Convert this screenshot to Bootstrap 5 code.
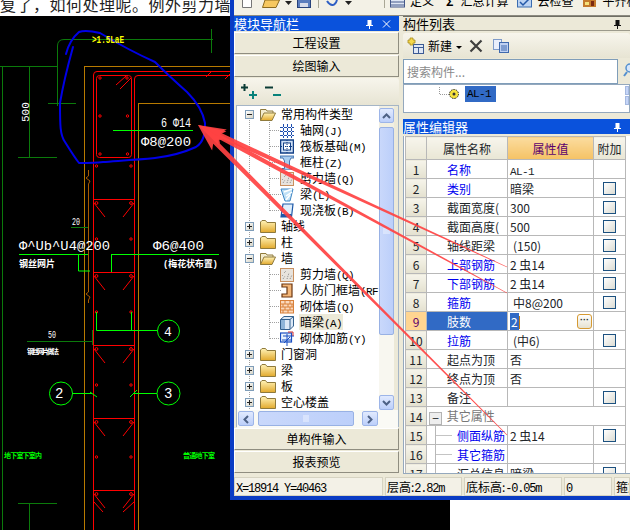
<!DOCTYPE html>
<html lang="zh">
<head>
    <meta charset="UTF-8">
    <title>模块导航栏 / 属性编辑器</title>
    <link href="https://cdn.jsdelivr.net/npm/bootstrap@5.3.3/dist/css/bootstrap.min.css" rel="stylesheet">
    <style>
        html, body { width: 630px; height: 530px; overflow: hidden; background: #000; }
        body { font: 12px/16px "Noto Sans CJK SC", "Liberation Sans", sans-serif; color: #000; }
        .shot { position: relative; width: 630px; height: 530px; }
        .asc { font: 11px "Liberation Mono", monospace; letter-spacing: -.6px; }

        /* left column: forum text + CAD drawing */
        .left-col { width: 230px; flex: none; }
        .forum-strip { height: 16px; background: #fff; overflow: hidden; white-space: nowrap; font-size: 16px; line-height: 16px; letter-spacing: .5px; color: #222; }
        .forum-strip span { display: block; margin-top: -4px; }
        .cad { display: block; width: 230px; height: 514px; background: #000; }
        .cad text { font-family: "Liberation Mono", "Noto Sans CJK SC", monospace; fill: #fff; }

        /* application window */
        .right-col { width: 400px; flex: none; }
        .app-win { height: 500px; background: #ece9d8; border-left: 4px solid #0a3cc4; border-bottom: 4px solid #0a3cc4; }
        .tool-strip { height: 16px; overflow: hidden; background: #f3f1e6; border-bottom: 1px solid #8d8b80; padding-left: 8px; }
        .tool-row { height: 8px; }
        .tool-row > * { flex: none; }
        .tool-row svg { display: block; }
        .tool-txt { font-size: 12px; line-height: 14px; }
        .tool-sep { width: 1px; height: 8px; background: #a9a796; }
        .m5 { margin-left: 5px; }
        .m7 { margin-left: 7px; }
        .m9 { margin-left: 9px; }
        .m10 { margin-left: 10px; }
        .m12 { margin-left: 12px; }
        .m32 { margin-left: 32px; }
        .bottom-pad { height: 30px; }
        .bottom-black { width: 220px; background: #000; }
        .bottom-white { flex: 1; background: #fff; }

        .dock-left { width: 165px; flex: none; }
        .dock-gap { width: 4px; flex: none; }
        .dock-right { width: 227px; flex: none; }
        .title-blue { height: 15px; background: #0a52dc; color: #fff; font-size: 13px; line-height: 15px; }
        .title-tan { height: 15px; background: #ece9d8; border-top: 1px solid #6f6e64; border-bottom: 1px solid #9c9a8c; font-size: 13px; line-height: 13px; }
        .pin { width: 9px; height: 10px; flex: none; }
        .dock-btn-top { height: 1px; }
        .dock-btn { display: block; width: 100%; height: 22px; padding: 0; margin-bottom: 1px; font-size: 12px; line-height: 18px; color: #000; background: #ece9d8; border: 1px solid #fff; border-right-color: #8f8d80; border-bottom-color: #8f8d80; border-radius: 0; }
        .nav-inner { height: 350px; margin-left: 2px; }
        .nav-tools { height: 27px; background: linear-gradient(#f7f5ec, #e7e4d3); padding-left: 5px; border-radius: 3px 3px 0 0; }
        .tree-wrap { height: 322px; background: #ece9d8; border: 1px solid #a5b5c6; }
        .tree-main { width: 142px; flex: none; height: 304px; background: #fff; overflow: hidden; }
        .vbar { width: 15px; flex: none; height: 304px; padding-top: 2px; background: #f1efe2; }
        .hbar { height: 18px; padding: 1px 0 2px 1px; background: #fafaf5; }
        .sb-btn { background: linear-gradient(#e1eafe, #bccffa); border: 1px solid #9db5e8; border-radius: 2px; color: #4d6185; flex: none; }
        .sb-btn svg { display: block; margin: auto; }
        .sb-thumb { background: linear-gradient(90deg, #c9d8fb, #bccffa); border: 1px solid #98b1e4; border-radius: 2px; }
        .v-btn { height: 15px; padding-top: 4px; }
        .h-btn { width: 16px; padding-top: 3px; }
        .v-track { height: 60px; flex: none; background: #f8f7f0; }
        .h-thumb { width: 96px; }

        .tree-row { height: 16px; white-space: nowrap; background-repeat: no-repeat; background-image: repeating-linear-gradient(#a0a0a0 0 1px, transparent 1px 2px); background-size: 1px 100%; background-position: 12px 0; }
        .tree-row.lv1 { padding-left: 8px; }
        .tree-row.lv2 { padding-left: 43px; background-image: repeating-linear-gradient(#a0a0a0 0 1px, transparent 1px 2px), repeating-linear-gradient(#a0a0a0 0 1px, transparent 1px 2px), repeating-linear-gradient(90deg, #a0a0a0 0 1px, transparent 1px 2px); background-size: 1px 100%, 1px 100%, 11px 1px; background-position: 12px 0, 32px 0, 33px 8px; }
        .tree-row.lv2.last { background-size: 1px 100%, 1px 9px, 11px 1px; }
        .tree-row.first { background-position: 12px 8px; }
        .exp-box { width: 9px; height: 9px; flex: none; background: linear-gradient(135deg, #fff, #d5d3c5); border: 1px solid #7f9db9; margin-right: 6px; }
        .exp-box svg { display: block; }
        .tree-folder { width: 16px; height: 14px; flex: none; margin-right: 5px; }
        .tree-ico { width: 14px; height: 15px; flex: none; margin-right: 6px; }
        .tree-sel { background: #ece9d8; padding: 0 1px; margin-left: -1px; }

        .status-row { height: 19px; margin-top: 3px; gap: 2px; }
        .status-cell { height: 19px; flex: none; background: #f3f1e7; border: 1px solid #d6d3c2; padding-left: 1px; line-height: 17px; overflow: hidden; white-space: nowrap; }
        .status-cell .asc { font-size: 12px; letter-spacing: -1.2px; }
        .st1 { width: 149px; }
        .st2 { width: 77px; }
        .st3 { width: 98px; }
        .st4 { width: 48px; }
        .st5 { flex: 1 !important; }

        .list-tools { height: 25px; margin-top: 2px; background: linear-gradient(#f7f5ec, #e7e4d3); padding-left: 4px; border-radius: 3px 3px 0 0; }
        .list-new::after { vertical-align: 2px; margin-left: 4px; border-top-width: 3px; border-left-width: 3px; border-right-width: 3px; }
        .search-row { height: 25px; margin-top: 1px; }
        .search-box { width: 216px; height: 25px; padding: 0 3px; border: 1px solid #7f9db9; border-radius: 0; font-size: 12px; }
        .search-box::placeholder { color: #8a8a8a; }
        .list-box { height: 29px; background: #fff; border: 1px solid #94a8bd; padding: 1px 0 0 34px; }
        .sel-item { background: #316ac5; padding: 0 2px; line-height: 16px; height: 16px; width: 31px; }
        .mini-bar { width: 4px; margin-left: auto; }
        .mini-bar i { display: block; height: 9px; margin-bottom: 1px; background: #c5d5f7; border: 1px solid #a5b9e0; }
        .prop-title { margin-top: 6px; }
        .grid-wrap { height: 338px; overflow: hidden; margin-top: 2px; background: #fff; border-left: 1px solid #94a8bd; border-bottom: 1px solid #94a8bd; }
        .grid-main { width: 222px; flex: none; }
        .grid-bar { width: 4px; padding-top: 1px; }
        .grid-bar i { display: block; height: 10px; margin-bottom: 2px; background: #c5d5f7; border: 1px solid #a5b9e0; }
        .prop-grid { --bs-border-color: #b8b8b8; width: 220px; margin: 0 0 0 1px; table-layout: fixed; }
        .prop-grid th, .prop-grid td { padding: 0; height: 19px; font-weight: 400; font-size: 12px; line-height: 17px; white-space: nowrap; overflow: hidden; vertical-align: middle; }
        .prop-grid thead th { height: 23px; text-align: center; background: linear-gradient(#f7f5ec, #e9e6d5); }
        .prop-grid thead th.hd-val { background: linear-gradient(#fbdc9f, #f5c264); color: #5a006e; }
        .prop-grid tbody th { text-align: center; background: linear-gradient(#f6f4ea, #e4e1cf); }
        .prop-grid td.nm { padding-left: 20px; }
        .prop-grid td.sub { padding-left: 30px; }
        .prop-grid td.val { padding-left: 2px; }
        .prop-grid td.pad { padding-left: 5px; }
        .lnk { color: #0000f0; }
        .prop-grid tr.cur th { background: #ffd591; color: #5a006e; }
        .prop-grid tr.cur td.nm { background: #316ac5; color: #fff; }
        .chk { display: block; width: 13px; height: 13px; margin: 0 0 0 9px; border: 1px solid #1c5180; background: linear-gradient(135deg, #fff, #dcdcd3); }
        .val-sel { background: #316ac5; color: #fff; padding: 0 1px; }
        .caret-bar { display: inline-block; width: 1px; height: 13px; background: #c47a10; vertical-align: -2px; }
        .dots-btn { width: 15px; height: 15px; background: linear-gradient(#fff, #e6e2d0); border: 1px solid #d69a32; border-radius: 3px; font: 700 9px/11px "Liberation Sans", sans-serif; text-align: center; margin-right: 1px; }
        .grp-box { display: inline-block; width: 13px; height: 13px; margin: 0 2px; border: 1px solid #b3b3b3; background: #eeeeee; text-align: center; line-height: 10px; vertical-align: -2px; }
        .grp-txt { color: #777; }
        .sub-line { position: relative; }
        .sub-line::before { content: ""; position: absolute; left: 8px; top: -1px; bottom: -1px; width: 1px; background: #b8b8b8; }
        .sub-line::after { content: ""; position: absolute; left: 9px; top: 9px; width: 16px; height: 1px; background: #c4c4c4; }

        .arrows { position: absolute; left: 0; top: 0; width: 630px; height: 530px; pointer-events: none; }
        .defs-holder { width: 0; height: 0; overflow: hidden; }
    </style>
</head>
<body>

<div class="shot d-flex">

    <!-- CAD -->
    <div class="left-col">
        <div class="forum-strip"><span>复了，如何处理呢。例外剪力墙箍</span></div>
        <svg class="cad" id="cad" viewBox="0 16 230 514" fill="none">
            <!-- long verticals -->
            <rect x="2" y="66" width="1" height="464" fill="#0b7a0b"/>
            <rect x="84" y="66" width="1" height="464" fill="#b87a00"/>
            <rect x="138" y="103" width="1" height="427" fill="#b87a00"/>
            <rect x="93" y="75" width="1" height="455" fill="#f00"/>
            <rect x="134" y="79" width="1" height="451" fill="#f00"/>
            <!-- dark green dimensions -->
            <g stroke="#0b7a0b" stroke-width="1">
                <path d="M0 66.5H57.5M29.5 66V157M18 157.5H57M57.5 106V46Q57.5 39.5 64 39.5H213M211.5 29V53M48 103.5H76"/>
                <path d="M71 227.5H88M27 341.5H92M92.5 330V345M18 503.5H57M29.5 503V530"/>
            </g>
            <!-- brown outline -->
            <path d="M84 66.5H230M138 103.5H230" stroke="#b87a00"/>
            <path d="M88.5 170V176L86 178L90 181L88.5 184V292L86 294L90 297L88.5 300V303" stroke="#a85a00"/>
            <!-- red rebar -->
            <g stroke="#f00" id="red">
                <path d="M93.5 75Q93.5 71.5 97 71.5H230M134.5 79Q134.5 75.5 138 75.5H230"/>
                <rect x="96.5" y="75.5" width="35" height="82" rx="3"/>
                <path d="M116 85L126 76M120 89L131 78M206 77L212 71M225 79L230 74"/>
            </g>
            <!-- bright green leaders -->
            <g stroke="#0f0">
                <path d="M113 130.5H193M19 254.5H88M111 254.5H219M78.5 254V271H90M111.5 254V272"/>
                <path d="M96.5 312V330.5H157M131.5 312V331"/>
                <path d="M72 393.5H92M90 392L97 397M133 393.5H157M130 397L137 390"/>
                <circle cx="168.5" cy="331" r="11"/>
                <circle cx="61" cy="393.5" r="11.5"/>
                <circle cx="168.5" cy="393.5" r="11.5"/>
            </g>
            <!-- hand drawn blue ring -->
            <path stroke="#0000e6" stroke-width="2" stroke-linejoin="round" stroke-linecap="round" d="M66 54C68 46 72 38 79 32C84 30 92 31 100 33C115 42 135 53 155 62C165 72 178 84 187 92C197 102 203 112 205 123C205 133 204 142 196 147C185 152 172 156 155 158C135 160 115 161 103 162C95 163 88 163 79 163C75 158 70 150 65 142C60 135 60 125 60 103C63 85 68 65 73 47"/>
            <!-- labels -->
            <text x="92" y="43" font-size="10" font-weight="700" style="fill:#ff0" textLength="32" lengthAdjust="spacingAndGlyphs">&gt;1.5LaE</text>
            <text transform="translate(29 122) rotate(-90)" font-size="11">500</text>
            <text x="161" y="127" font-size="13" textLength="30" lengthAdjust="spacingAndGlyphs">6 Φ14</text>
            <text x="141" y="146" font-size="13" textLength="50" lengthAdjust="spacingAndGlyphs">Φ8@200</text>
            <text x="72" y="225" font-size="10" textLength="8" lengthAdjust="spacingAndGlyphs">20</text>
            <text x="19" y="250" font-size="13" textLength="91" lengthAdjust="spacingAndGlyphs">Φ^Ub^U4@200</text>
            <text x="153" y="250" font-size="13" textLength="51" lengthAdjust="spacingAndGlyphs">Φ6@400</text>
            <text x="19" y="267" font-size="9" font-weight="700" textLength="36">钢丝网片</text>
            <text x="163" y="267" font-size="9" font-weight="700" textLength="55">(梅花状布置)</text>
            <text x="48" y="338" font-size="10" textLength="8" lengthAdjust="spacingAndGlyphs">50</text>
            <text x="27" y="354" font-size="7" font-weight="700" textLength="32">钢丝网片做法</text>
            <text x="164" y="336" font-size="13">4</text>
            <text x="55" y="398" font-size="14">2</text>
            <text x="164" y="398" font-size="14">3</text>
            <text x="4" y="458" font-size="7" font-weight="700" style="fill:#0f0" textLength="38">地下室下室内</text>
            <text x="183" y="458" font-size="7" font-weight="700" style="fill:#0f0" textLength="32">普通地下室</text>
        </svg>
    </div>

    <div class="right-col d-flex flex-column">
        <div class="app-win">
            <!-- main toolbar, mostly cut off by the window above -->
            <div class="tool-strip">
                <div class="tool-row d-flex align-items-end">
                    <svg width="10" height="8"><path d="M.5 0V7.5H9.5V0" fill="#fff" stroke="#777"/></svg>
                    <svg class="m10" width="18" height="8"><path d="M3 0L.5 7.5H14L17.5 0Z" fill="#f6c860" stroke="#8a6a20"/></svg>
                    <svg class="m5" width="7" height="8"><path d="M0 1H7L3.5 5Z" fill="#222"/></svg>
                    <svg class="m5" width="14" height="8"><rect x=".5" y="-4" width="13" height="11.5" fill="#5b7dbd" stroke="#27427a"/><rect x="3" y="3" width="8" height="4" fill="#d8dcea"/></svg>
                    <span class="tool-sep m7"></span>
                    <svg class="m7" width="12" height="8"><path d="M1 1C5 7 9 6 11 0" fill="none" stroke="#2f5fc4" stroke-width="2"/></svg>
                    <svg class="m7" width="7" height="8"><path d="M0 1H7L3.5 5Z" fill="#222"/></svg>
                    <span class="tool-sep m32"></span>
                    <svg class="m5" width="15" height="8"><rect x=".5" y="-4" width="14" height="11" fill="#dfe7f5" stroke="#45598a"/><path d="M1 2H14M1 5H14" stroke="#45598a"/></svg>
                    <span class="tool-txt m5">定义</span>
                    <span class="tool-txt m12 fw-bold">Σ</span>
                    <span class="tool-txt m7">汇总计算</span>
                    <svg class="m9" width="15" height="8"><rect x=".5" y="-4" width="14" height="11" fill="#bcd3f2" stroke="#3a6cb0"/><path d="M3 2L6 5L12 -1" stroke="#2459a8" stroke-width="1.5" fill="none"/></svg>
                    <span class="tool-txt m5">云检查</span>
                    <svg class="m9" width="15" height="8"><rect x="1" y="0" width="13" height="7" fill="#c47a2c"/><rect x="3" y="2" width="4" height="3" fill="#f6e27a"/><rect x="9" y="1" width="3" height="5" fill="#7b2a10"/></svg>
                    <span class="tool-txt m5">平齐板顶</span>
                </div>
            </div>

            <div class="d-flex">
                <!-- module nav -->
                <div class="dock-left">
                    <div class="title-blue d-flex align-items-center">
                        <span class="flex-grow-1">模块导航栏</span>
                        <svg class="pin me-2" viewBox="0 0 9 10"><path d="M2.5 1H6.5V6H8V7H5V10H4V7H1V6H2.5Z" fill="#fff"/></svg>
                        <svg class="pin me-2" viewBox="0 0 9 10"><path d="M1 1.5L8 8.5M8 1.5L1 8.5" stroke="#fff"/></svg>
                    </div>
                    <div class="dock-btn-top"></div>
                    <button type="button" class="btn dock-btn">工程设置</button>
                    <button type="button" class="btn dock-btn">绘图输入</button>
                    <div class="nav-inner d-flex flex-column">
                        <div class="nav-tools d-flex align-items-center gap-2">
                            <svg width="16" height="15"><path d="M3.5 0V7M0 3.5H7" stroke="#0a3b35" stroke-width="2"/><path d="M12 7V15M8 11H16" stroke="#08827a" stroke-width="2"/></svg>
                            <svg width="16" height="15"><path d="M0 3.5H8" stroke="#0a3b35" stroke-width="2"/><path d="M8 11H16" stroke="#08827a" stroke-width="2"/></svg>
                        </div>
                        <div class="tree-wrap">
                            <div class="d-flex">
                                <div class="tree-main">
                                    <div class="tree-row lv1 first d-flex align-items-center"><span class="exp-box"><svg width="7" height="7"><path d="M1 3.5H6" stroke="#222"/></svg></span><svg class="tree-folder"><use href="#ic-open"/></svg><span>常用构件类型</span></div>
                                    <div class="tree-row lv2 d-flex align-items-center"><svg class="tree-ico"><use href="#ic-grid"/></svg><span>轴网<span class="asc">(J)</span></span></div>
                                    <div class="tree-row lv2 d-flex align-items-center"><svg class="tree-ico"><use href="#ic-raft"/></svg><span>筏板基础<span class="asc">(M)</span></span></div>
                                    <div class="tree-row lv2 d-flex align-items-center"><svg class="tree-ico"><use href="#ic-col"/></svg><span>框柱<span class="asc">(Z)</span></span></div>
                                    <div class="tree-row lv2 d-flex align-items-center"><svg class="tree-ico"><use href="#ic-wall"/></svg><span>剪力墙<span class="asc">(Q)</span></span></div>
                                    <div class="tree-row lv2 d-flex align-items-center"><svg class="tree-ico"><use href="#ic-beam"/></svg><span>梁<span class="asc">(L)</span></span></div>
                                    <div class="tree-row lv2 last d-flex align-items-center"><svg class="tree-ico"><use href="#ic-slab"/></svg><span>现浇板<span class="asc">(B)</span></span></div>
                                    <div class="tree-row lv1 d-flex align-items-center"><span class="exp-box"><svg width="7" height="7"><path d="M1 3.5H6M3.5 1V6" stroke="#222"/></svg></span><svg class="tree-folder"><use href="#ic-closed"/></svg><span>轴线</span></div>
                                    <div class="tree-row lv1 d-flex align-items-center"><span class="exp-box"><svg width="7" height="7"><path d="M1 3.5H6M3.5 1V6" stroke="#222"/></svg></span><svg class="tree-folder"><use href="#ic-closed"/></svg><span>柱</span></div>
                                    <div class="tree-row lv1 d-flex align-items-center"><span class="exp-box"><svg width="7" height="7"><path d="M1 3.5H6" stroke="#222"/></svg></span><svg class="tree-folder"><use href="#ic-open"/></svg><span>墙</span></div>
                                    <div class="tree-row lv2 d-flex align-items-center"><svg class="tree-ico"><use href="#ic-wall"/></svg><span>剪力墙<span class="asc">(Q)</span></span></div>
                                    <div class="tree-row lv2 d-flex align-items-center"><svg class="tree-ico"><use href="#ic-door"/></svg><span>人防门框墙<span class="asc">(RF</span></span></div>
                                    <div class="tree-row lv2 d-flex align-items-center"><svg class="tree-ico"><use href="#ic-brick"/></svg><span>砌体墙<span class="asc">(Q)</span></span></div>
                                    <div class="tree-row lv2 d-flex align-items-center"><svg class="tree-ico"><use href="#ic-dark"/></svg><span class="tree-sel">暗梁<span class="asc">(A)</span></span></div>
                                    <div class="tree-row lv2 last d-flex align-items-center"><svg class="tree-ico"><use href="#ic-rebar"/></svg><span>砌体加筋<span class="asc">(Y)</span></span></div>
                                    <div class="tree-row lv1 d-flex align-items-center"><span class="exp-box"><svg width="7" height="7"><path d="M1 3.5H6M3.5 1V6" stroke="#222"/></svg></span><svg class="tree-folder"><use href="#ic-closed"/></svg><span>门窗洞</span></div>
                                    <div class="tree-row lv1 d-flex align-items-center"><span class="exp-box"><svg width="7" height="7"><path d="M1 3.5H6M3.5 1V6" stroke="#222"/></svg></span><svg class="tree-folder"><use href="#ic-closed"/></svg><span>梁</span></div>
                                    <div class="tree-row lv1 d-flex align-items-center"><span class="exp-box"><svg width="7" height="7"><path d="M1 3.5H6M3.5 1V6" stroke="#222"/></svg></span><svg class="tree-folder"><use href="#ic-closed"/></svg><span>板</span></div>
                                    <div class="tree-row lv1 d-flex align-items-center"><span class="exp-box"><svg width="7" height="7"><path d="M1 3.5H6M3.5 1V6" stroke="#222"/></svg></span><svg class="tree-folder"><use href="#ic-closed"/></svg><span>空心楼盖</span></div>
                                </div>
                                <div class="vbar d-flex flex-column">
                                    <div class="sb-btn v-btn"><svg width="9" height="6"><path d="M1 5L4.5 1.5L8 5" fill="none" stroke="#4d6185" stroke-width="2"/></svg></div>
                                    <div class="sb-thumb flex-grow-1 mt-1 d-flex align-items-center justify-content-center"><svg width="7" height="7"><path d="M0 1H7M0 3H7M0 5H7" stroke="#eef3ff"/></svg></div>
                                    <div class="v-track"></div>
                                    <div class="sb-btn v-btn"><svg width="9" height="6"><path d="M1 1L4.5 4.5L8 1" fill="none" stroke="#4d6185" stroke-width="2"/></svg></div>
                                </div>
                            </div>
                            <div class="hbar d-flex">
                                <div class="sb-btn h-btn"><svg width="6" height="9"><path d="M5 1L1.5 4.5L5 8" fill="none" stroke="#4d6185" stroke-width="2"/></svg></div>
                                <div class="sb-thumb h-thumb ms-1 d-flex align-items-center justify-content-center"><svg width="7" height="7"><path d="M1 0V7M3 0V7M5 0V7" stroke="#eef3ff"/></svg></div>
                                <div class="sb-btn h-btn ms-2"><svg width="6" height="9"><path d="M1 1L4.5 4.5L1 8" fill="none" stroke="#4d6185" stroke-width="2"/></svg></div>
                            </div>
                        </div>
                    </div>
                    <button type="button" class="btn dock-btn">单构件输入</button>
                    <button type="button" class="btn dock-btn">报表预览</button>
                </div>

                <div class="dock-gap"></div>

                <!-- component list + property editor -->
                <div class="dock-right">
                    <div class="title-tan d-flex align-items-center">
                        <span class="flex-grow-1">构件列表</span>
                        <svg class="pin me-2" viewBox="0 0 9 10"><path d="M2.5 1H6.5V6H8V7H5V10H4V7H1V6H2.5Z" fill="#111"/></svg>
                    </div>
                    <div class="list-tools d-flex align-items-center">
                        <svg width="17" height="17"><rect x="6.5" y="7.5" width="10" height="9" fill="#dfe7f5" stroke="#3c5a94"/><path d="M6 10.5H16M11.5 10V16" stroke="#3c5a94"/><path d="M3 1H6V3H8V6H6V8H3V6H1V3H3Z" fill="#f5d84a" stroke="#a68a20" stroke-width=".8"/></svg>
                        <span class="list-new dropdown-toggle ms-1">新建</span>
                        <svg class="m7" width="14" height="14"><path d="M1.5 1.5L12.5 12.5M12.5 1.5L1.5 12.5" stroke="#3f3f3f" stroke-width="2.2"/></svg>
                        <svg class="m10" width="16" height="14"><rect x=".5" y=".5" width="8" height="10" fill="#e9eefb" stroke="#7f9bc9"/><rect x="6.5" y="3.5" width="9" height="10" fill="#bed0f2" stroke="#3f69ad"/><path d="M8 7H14M8 9H14M8 11H14" stroke="#3f69ad"/></svg>
                    </div>
                    <div class="search-row d-flex">
                        <input type="text" class="form-control search-box" placeholder="搜索构件...">
                        <svg class="ms-1" width="8" height="25"><circle cx="8" cy="9" r="4" fill="#d6e6fa" stroke="#5590cf" stroke-width="1.5"/><path d="M5 13L2 17" stroke="#5590cf" stroke-width="2"/></svg>
                    </div>
                    <div class="list-box d-flex">
                        <svg width="27" height="16" fill="none"><path d="M1.5 1V8.5H11" stroke="#999" stroke-dasharray="1 1"/><circle cx="16" cy="8" r="4.5" fill="#f6e23c" stroke="#222" stroke-dasharray="1.5 1"/><circle cx="16" cy="8" r="1.5" fill="#333"/></svg>
                        <span class="sel-item asc">AL-1</span>
                        <div class="mini-bar"><i></i><i></i></div>
                    </div>
                    <div class="title-blue prop-title d-flex align-items-center">
                        <span class="flex-grow-1">属性编辑器</span>
                        <svg class="pin me-2" viewBox="0 0 9 10"><path d="M2.5 1H6.5V6H8V7H5V10H4V7H1V6H2.5Z" fill="#fff"/></svg>
                    </div>
                    <div class="grid-wrap d-flex">
                        <div class="grid-main">
                            <table class="table table-bordered prop-grid">
                                <colgroup><col style="width:21px"><col style="width:81px"><col style="width:86px"><col style="width:32px"></colgroup>
                                <thead>
                                    <tr><th></th><th>属性名称</th><th class="hd-val">属性值</th><th>附加</th></tr>
                                </thead>
                                <tbody>
                                    <tr><th>1</th><td class="nm lnk">名称</td><td class="val"><span class="asc">AL-1</span></td><td></td></tr>
                                    <tr><th>2</th><td class="nm lnk">类别</td><td class="val">暗梁</td><td><span class="chk"></span></td></tr>
                                    <tr><th>3</th><td class="nm">截面宽度(</td><td class="val">300</td><td><span class="chk"></span></td></tr>
                                    <tr><th>4</th><td class="nm">截面高度(</td><td class="val">500</td><td><span class="chk"></span></td></tr>
                                    <tr><th>5</th><td class="nm">轴线距梁</td><td class="val pad">(150)</td><td><span class="chk"></span></td></tr>
                                    <tr><th>6</th><td class="nm lnk">上部钢筋</td><td class="val">2 虫14</td><td><span class="chk"></span></td></tr>
                                    <tr><th>7</th><td class="nm lnk">下部钢筋</td><td class="val">2 虫14</td><td><span class="chk"></span></td></tr>
                                    <tr><th>8</th><td class="nm lnk">箍筋</td><td class="val pad">中8@200</td><td><span class="chk"></span></td></tr>
                                    <tr class="cur"><th>9</th><td class="nm">肢数</td><td class="val"><div class="d-flex align-items-center justify-content-between"><span><span class="val-sel">2</span><span class="caret-bar"></span></span><span class="dots-btn">···</span></div></td><td></td></tr>
                                    <tr><th>10</th><td class="nm lnk">拉筋</td><td class="val pad">(中6)</td><td><span class="chk"></span></td></tr>
                                    <tr><th>11</th><td class="nm">起点为顶</td><td class="val">否</td><td></td></tr>
                                    <tr><th>12</th><td class="nm">终点为顶</td><td class="val">否</td><td></td></tr>
                                    <tr><th>13</th><td class="nm">备注</td><td class="val"></td><td><span class="chk"></span></td></tr>
                                    <tr><th>14</th><td colspan="3"><span class="grp-box">−</span> <span class="grp-txt">其它属性</span></td></tr>
                                    <tr><th>15</th><td class="sub sub-line lnk">侧面纵筋</td><td class="val">2 虫14</td><td><span class="chk"></span></td></tr>
                                    <tr><th>16</th><td class="sub sub-line lnk">其它箍筋</td><td class="val"></td><td></td></tr>
                                    <tr><th>17</th><td class="sub sub-line">汇总信息</td><td class="val">暗梁</td><td><span class="chk"></span></td></tr>
                                </tbody>
                            </table>
                        </div>
                        <div class="grid-bar ms-1"><i></i><i class="h-100"></i></div>
                    </div>
                </div>
            </div>

            <div class="status-row d-flex">
                <div class="status-cell st1"><span class="asc">X=18914 Y=40463</span></div>
                <div class="status-cell st2">层高:<span class="asc">2.82m</span></div>
                <div class="status-cell st3">底标高:<span class="asc">-0.05m</span></div>
                <div class="status-cell st4"><span class="asc">0</span></div>
                <div class="status-cell st5">箍筋</div>
            </div>
        </div>
        <div class="bottom-pad d-flex">
            <div class="bottom-black"></div>
            <div class="bottom-white"></div>
        </div>
    </div>

    <!-- red arrows drawn over everything -->
    <svg class="arrows" id="arrows" viewBox="0 0 630 530"></svg>
</div>

<!-- tree icons -->
<div class="defs-holder">
<svg width="0" height="0">
    <defs>
        <linearGradient id="fold" x1="0" y1="0" x2="0" y2="1"><stop offset="0" stop-color="#fff3b8"/><stop offset="1" stop-color="#e2a92c"/></linearGradient>
    </defs>
    <symbol id="ic-closed" viewBox="0 0 16 14"><path d="M.5 3V13.5H15.5V3.5H7L5.5 1.5H2Z" fill="url(#fold)" stroke="#8f7a3c"/></symbol>
    <symbol id="ic-open" viewBox="0 0 16 14"><path d="M.5 13.5V2.5H6L7 4H13V6" fill="#f3ecd0" stroke="#8f7a3c"/><path d="M.5 13.5L4 6H15.5L12 13.5Z" fill="url(#fold)" stroke="#8f7a3c"/></symbol>
    <symbol id="ic-grid" viewBox="0 0 14 15"><path d="M3.5 1V15M7.5 1V15M11.5 1V15M0 4.5H14M0 8.5H14M0 12.5H14" stroke="#1f4fb0" stroke-dasharray="3 1"/></symbol>
    <symbol id="ic-raft" viewBox="0 0 14 15"><rect x=".5" y="1" width="13" height="13" fill="#cfe0f5" stroke="#123f86" stroke-width="1.5"/><rect x="3.5" y="4" width="7" height="7" fill="#fff" stroke="#123f86"/><path d="M7 1V14M1 7.5H13" stroke="#123f86" stroke-dasharray="1 1"/></symbol>
    <symbol id="ic-col" viewBox="0 0 14 15"><path d="M0 1H14V3H11L9.5 6V13.5H12V15H2V13.5H4.5V6L3 3H0Z" fill="#a9cdf0" stroke="#23589f" stroke-width=".8"/></symbol>
    <symbol id="ic-wall" viewBox="0 0 14 15"><rect x=".5" y="1.5" width="13" height="13" fill="#e8e3dd" stroke="#c9905f"/><path d="M3 12L5 9M7 12L9 6M10 12L12 8M4 6L6 4M2 9L3 8" stroke="#8a8a8a" stroke-dasharray="1 1"/></symbol>
    <symbol id="ic-beam" viewBox="0 0 14 15"><path d="M1 2H13L10 14H5Z" fill="#bfe0f6" stroke="#3f86c4"/><path d="M4 5L12 2M6 9L12 5M6 13L10 8" stroke="#fff" stroke-width="1.5"/></symbol>
    <symbol id="ic-slab" viewBox="0 0 14 15"><path d="M3 1H13L11.5 14H1Z" fill="#dfeefb" stroke="#1d58a8" stroke-width="1.2"/><path d="M1 11H11.5V14H1Z" fill="#1d58a8"/></symbol>
    <symbol id="ic-door" viewBox="0 0 14 15"><path d="M2 1H12V14H2V11H7V4H2Z" fill="#f2b679" stroke="#6a3510" stroke-width="1.2"/></symbol>
    <symbol id="ic-brick" viewBox="0 0 14 15"><rect x=".5" y="1.5" width="13" height="12.5" fill="#fbd9bd" stroke="#d8803a"/><path d="M0 5H14M0 8H14M0 11H14M5 1.5V5M10 1.5V5M3 5V8M8 5V8M12 5V8M5 8V11M10 8V11M3 11V14M8 11V14" stroke="#d8803a"/></symbol>
    <symbol id="ic-dark" viewBox="0 0 14 15"><path d="M.5 4.5L4 1.5H13.5V11L10 14.5H.5Z" fill="#dbe8f6" stroke="#34618f"/><path d="M.5 4.5H10V14.5M10 4.5L13.5 1.5" fill="none" stroke="#34618f"/><rect x="1" y="5" width="4" height="9" fill="#8eb4d8"/></symbol>
    <symbol id="ic-rebar" viewBox="0 0 14 15"><rect x=".5" y="2" width="11" height="9" fill="#e9f1fb" stroke="#1a4fc2" stroke-width="1.2"/><path d="M3 5H14M2 9H12M7 3V15M4 12L10 6" stroke="#1a4fc2"/><path d="M8 1L13 1V5" fill="none" stroke="#d03030"/></symbol>
</svg>
</div>

<script>
    // repeated ties along the wall column
    const svgNS = 'http://www.w3.org/2000/svg';
    const red = document.getElementById('red');
    function addRed(tag, attrs) {
        const el = document.createElementNS(svgNS, tag);
        for (const k in attrs) el.setAttribute(k, attrs[k]);
        red.appendChild(el);
    }
    addRed('circle', {cx: 100, cy: 78, r: 1.2});
    addRed('circle', {cx: 127, cy: 78, r: 1.2});
    [116, 154].forEach(y => {
        addRed('circle', {cx: 100, cy: y, r: 1.2});
        addRed('circle', {cx: 127.5, cy: y, r: 1.2});
    });
    [199, 272, 345, 418, 490].forEach(y => {
        addRed('path', {d: `M93 ${y + .5}H134M94 ${y + 4}L105 ${y + 18}M134 ${y + 4}L123 ${y + 18}`});
        addRed('circle', {cx: 96.5, cy: y + 4, r: 1.4});
        addRed('circle', {cx: 131, cy: y + 4, r: 1.4});
    });
    [166, 239, 312, 385, 457].forEach(y => {
        addRed('circle', {cx: 96.5, cy: y, r: 1.2});
        addRed('circle', {cx: 131, cy: y, r: 1.2});
    });
    addRed('path', {d: 'M94 502L103 512M134 502L123 512'});

    // tapered arrows from the note in the drawing to the table
    const arrows = document.getElementById('arrows');
    const tip = [198, 125];
    [[507, 267], [507, 293], [507, 435]].forEach(tail => {
        const dx = tail[0] - tip[0], dy = tail[1] - tip[1];
        const len = Math.hypot(dx, dy), ux = dx / len, uy = dy / len, nx = -uy, ny = ux;
        const pt = (s, w) => (tip[0] + ux * s + nx * w).toFixed(1) + ',' + (tip[1] + uy * s + ny * w).toFixed(1);
        const poly = document.createElementNS(svgNS, 'polygon');
        poly.setAttribute('points', [pt(0, 0), pt(28, 8), pt(24, 2.4), pt(len, .3), pt(len, -.3), pt(24, -2.4), pt(28, -8)].join(' '));
        poly.setAttribute('fill', '#ff4242');
        poly.setAttribute('fill-opacity', '.92');
        arrows.appendChild(poly);
    });
</script>
<script src="https://cdn.jsdelivr.net/npm/bootstrap@5.3.3/dist/js/bootstrap.bundle.min.js"></script>
</body>
</html>
